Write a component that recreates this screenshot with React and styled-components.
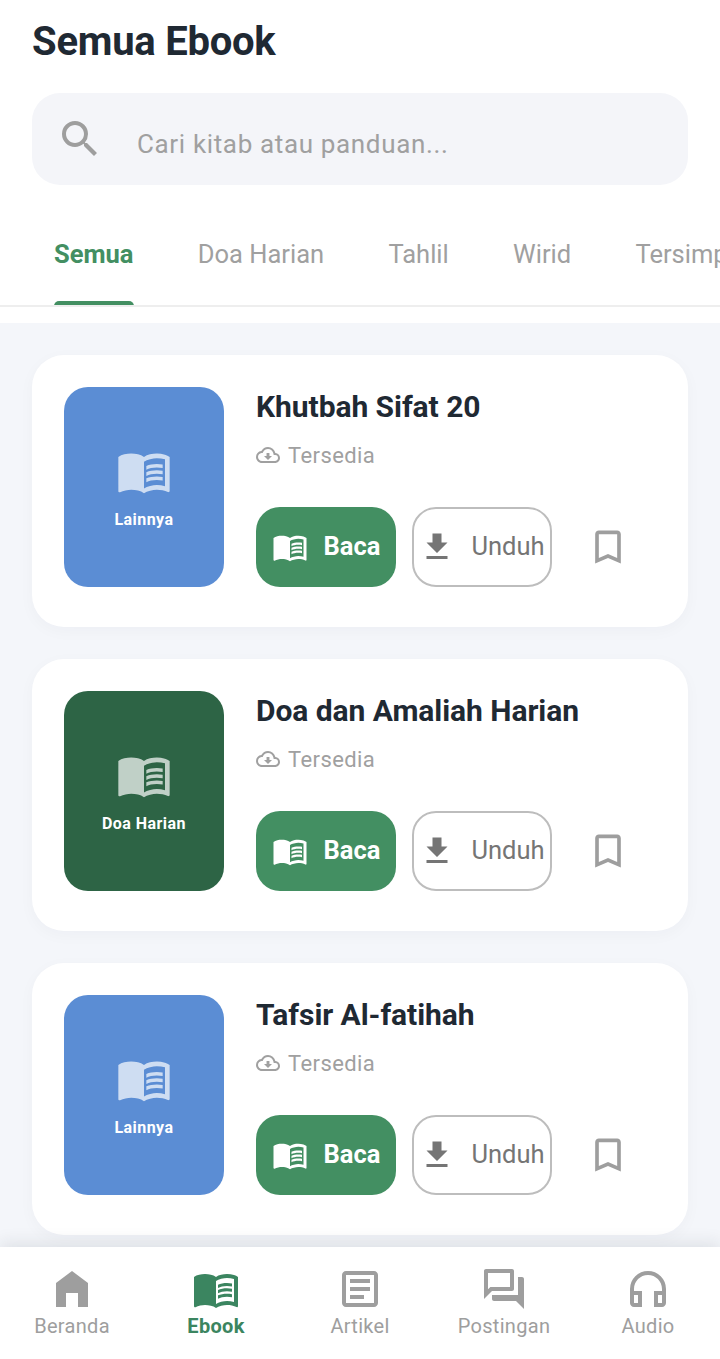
import styled, { createGlobalStyle } from 'styled-components'
import {
    MdSearch,
    MdMenuBook,
    MdFileDownload,
    MdBookmarkBorder,
    MdOutlineCloudDownload,
    MdHomeFilled,
    MdOutlineArticle,
    MdOutlineForum,
    MdOutlineHeadphones,
} from 'react-icons/md'

const GlobalStyle = createGlobalStyle`
    html, body {
        margin: 0;
        padding: 0;
        background: #fff;
        font-family: Roboto, "Liberation Sans", sans-serif;
    }
    * {
        box-sizing: border-box;
    }
`

const Page = styled.div`
    width: 720px;
    height: 1359px;
    display: flex;
    flex-direction: column;
    overflow: hidden;
    background: #f4f6fa;
`

const Header = styled.header`
    background: #fff;
    padding: 0 32px 16px;
    display: flex;
    flex-direction: column;
`

const Title = styled.h1`
    margin: 16px 0 0;
    font-size: 40px;
    line-height: 52px;
    font-weight: 700;
    letter-spacing: -0.25px;
    color: #1f2933;
`

const SearchBar = styled.div`
    margin-top: 25px;
    height: 92px;
    border-radius: 28px;
    background: #f4f5f9;
    display: flex;
    align-items: center;
    gap: 33px;
    padding: 0 24px;
    color: #9e9e9e;
`

const Placeholder = styled.span`
    margin-top: 10px;
    font-size: 26px;
    letter-spacing: 0.65px;
    color: #a0a0a0;
`

const Tabs = styled.nav`
    margin: 20px -32px 0;
    height: 102px;
    padding-left: 54px;
    display: flex;
    gap: 64.3px;
    overflow: hidden;
    border-bottom: 2px solid #eeeeee;
`

const Tab = styled.div`
    position: relative;
    flex: none;
    height: 100%;
    display: flex;
    align-items: center;
    font-size: 25.5px;
    padding-bottom: 2px;
    font-weight: ${props => (props.$active ? 700 : 400)};
    color: ${props => (props.$active ? '#438f62' : '#a0a0a0')};
`

const TabMarker = styled.span`
    position: absolute;
    left: 0;
    right: 0;
    bottom: -1px;
    height: 5px;
    border-radius: 8px 8px 0 0;
    background: #438f62;
`

const List = styled.main`
    flex: 1;
    min-height: 0;
    overflow: hidden;
    padding: 32px 32px 0;
    display: flex;
    flex-direction: column;
    gap: 32px;
`

const Card = styled.article`
    flex: none;
    height: 272px;
    padding: 32px 32px 40px;
    border-radius: 32px;
    background: #fff;
    display: flex;
    gap: 32px;
    box-shadow: 0 4px 16px rgba(31, 41, 51, 0.03);
`

const Cover = styled.div`
    flex: none;
    width: 160px;
    height: 200px;
    border-radius: 24px;
    background: ${props => props.$color};
    display: flex;
    flex-direction: column;
    align-items: center;
    justify-content: center;
    gap: 10px;
    color: #fff;
    svg {
        opacity: 0.7;
    }
`

const CoverLabel = styled.span`
    font-size: 16px;
    line-height: 22px;
    font-weight: 700;
    letter-spacing: 0.45px;
`

const Info = styled.div`
    flex: 1;
    min-width: 0;
    display: flex;
    flex-direction: column;
`

const BookTitle = styled.h2`
    margin: 0;
    font-size: 30px;
    line-height: 40px;
    font-weight: 700;
    letter-spacing: -0.05px;
    color: #1f2933;
`

const Status = styled.div`
    margin-top: 12px;
    height: 32px;
    display: flex;
    align-items: center;
    gap: 8px;
    font-size: 22px;
    letter-spacing: 0.4px;
    color: #a0a0a0;
`

const Actions = styled.div`
    margin-top: auto;
    display: flex;
    align-items: center;
    gap: 16px;
`

const ActionButton = styled.button`
    width: 140px;
    height: 80px;
    padding: 0;
    border-radius: 24px;
    display: flex;
    align-items: center;
    justify-content: center;
    gap: 16px;
    font-family: inherit;
    font-size: 25.5px;
    white-space: nowrap;
    font-weight: ${props => (props.$primary ? 700 : 400)};
    color: ${props => (props.$primary ? '#fff' : '#757575')};
    background: ${props => (props.$primary ? '#438f62' : '#fff')};
    border: ${props => (props.$primary ? 'none' : '2px solid #bdbdbd')};
`

const ButtonLabel = styled.span`
    margin-bottom: 2px;
`

const SaveButton = styled.button`
    width: 80px;
    height: 80px;
    padding: 0;
    border: none;
    background: none;
    display: flex;
    align-items: center;
    justify-content: center;
    color: #9e9e9e;
`

const BottomNav = styled.footer`
    flex: none;
    position: relative;
    height: 112px;
    background: #fff;
    display: grid;
    grid-template-columns: repeat(5, 1fr);
    box-shadow: 0 -4px 16px rgba(31, 41, 51, 0.1);
`

const NavItem = styled.div`
    padding-top: 18px;
    display: flex;
    flex-direction: column;
    align-items: center;
    font-size: 20px;
    line-height: 24px;
    letter-spacing: 0.3px;
    font-weight: ${props => (props.$active ? 700 : 400)};
    color: ${props => (props.$active ? '#3b8560' : '#9e9e9e')};
    svg {
        display: block;
        margin-bottom: 1px;
    }
`

const tabs = ['Semua', 'Doa Harian', 'Tahlil', 'Wirid', 'Tersimpan']

const books = [
    { id: 1, title: 'Khutbah Sifat 20', category: 'Lainnya', color: '#5b8dd4' },
    { id: 2, title: 'Doa dan Amaliah Harian', category: 'Doa Harian', color: '#2d6445' },
    { id: 3, title: 'Tafsir Al-fatihah', category: 'Lainnya', color: '#5b8dd4' },
]

const navItems = [
    { label: 'Beranda', icon: MdHomeFilled },
    { label: 'Ebook', icon: MdMenuBook, active: true },
    { label: 'Artikel', icon: MdOutlineArticle },
    { label: 'Postingan', icon: MdOutlineForum },
    { label: 'Audio', icon: MdOutlineHeadphones },
]

function App() {
    return (
        <Page>
            <GlobalStyle />
            <Header>
                <Title>Semua Ebook</Title>
                <SearchBar>
                    <MdSearch size={48} />
                    <Placeholder>Cari kitab atau panduan...</Placeholder>
                </SearchBar>
                <Tabs>
                    {tabs.map((tab, index) => (
                        <Tab key={tab} $active={index === 0}>
                            {tab}
                            {index === 0 && <TabMarker />}
                        </Tab>
                    ))}
                </Tabs>
            </Header>
            <List>
                {books.map(book => (
                    <Card key={book.id}>
                        <Cover $color={book.color}>
                            <MdMenuBook size={56} />
                            <CoverLabel>{book.category}</CoverLabel>
                        </Cover>
                        <Info>
                            <BookTitle>{book.title}</BookTitle>
                            <Status>
                                <MdOutlineCloudDownload size={24} />
                                Tersedia
                            </Status>
                            <Actions>
                                <ActionButton $primary>
                                    <MdMenuBook size={36} />
                                    <ButtonLabel>Baca</ButtonLabel>
                                </ActionButton>
                                <ActionButton>
                                    <MdFileDownload size={36} />
                                    <ButtonLabel>Unduh</ButtonLabel>
                                </ActionButton>
                                <SaveButton>
                                    <MdBookmarkBorder size={44} />
                                </SaveButton>
                            </Actions>
                        </Info>
                    </Card>
                ))}
            </List>
            <BottomNav>
                {navItems.map(item => (
                    <NavItem key={item.label} $active={item.active}>
                        <item.icon size={48} />
                        {item.label}
                    </NavItem>
                ))}
            </BottomNav>
        </Page>
    )
}

export default App
